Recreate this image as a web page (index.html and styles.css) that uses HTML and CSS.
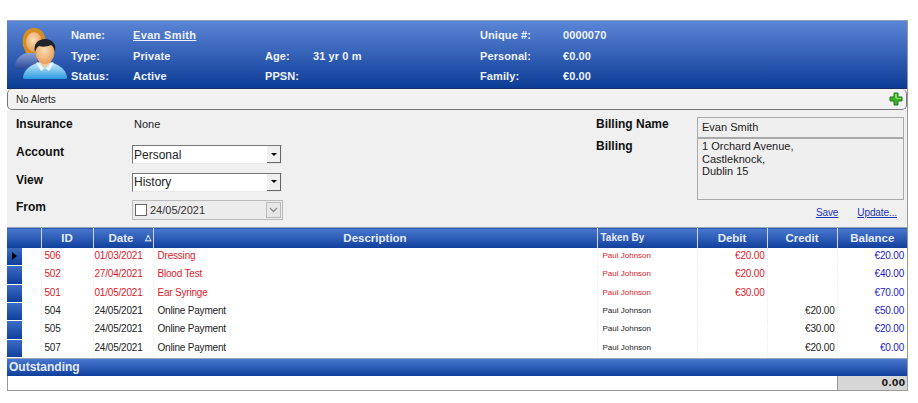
FILE: index.html
```html
<!DOCTYPE html>
<html lang="en">
<head>
<meta charset="UTF-8" />
<title>Account History</title>
<link rel="stylesheet" href="styles.css">
</head>
<body>
  <div id="conta">
    <div class="cabecalho">
      <svg class="avatar" width="54" height="55" viewBox="0 0 54 55">
        <defs>
          <linearGradient id="camisa" x1="0" y1="0" x2="0" y2="1">
            <stop offset="0" stop-color="#cdeefa" />
            <stop offset="1" stop-color="#2a9be0" />
          </linearGradient>
          <linearGradient id="camisa2" x1="0" y1="0" x2="0" y2="1">
            <stop offset="0" stop-color="#8ea6dc" />
            <stop offset="1" stop-color="#2c4796" />
          </linearGradient>
          <radialGradient id="pele" cx="0.45" cy="0.4" r="0.7">
            <stop offset="0" stop-color="#fde0b8" />
            <stop offset="1" stop-color="#e2924a" />
          </radialGradient>
        </defs>
        <!-- mulher, atras -->
        <path d="M1 41c0-8 6-13 14-15h8v17H4c-2 0-3-1-3-2z" fill="url(#camisa2)" />
        <path d="M9 20C7 9 12 2 20 2c8 0 13 7 11 18l-2 7H12z" fill="#d58c22" />
        <ellipse cx="20" cy="16" rx="8" ry="10" fill="url(#pele)" />
        <!-- homem, na frente -->
        <path d="M11 53c-2 0-2-1-2-2 1-8 9-13 18-15h8c9 2 17 7 18 15 0 1 0 2-2 2z" fill="url(#camisa)" />
        <path d="M25 36l6 6 6-6-2-3h-8z" fill="#f3c794" />
        <path d="M24 36l7 7 7-7 2 1-5 8-4-3-4 3-5-8z" fill="#e8f7fd" />
        <ellipse cx="31" cy="26" rx="9.500" ry="12" fill="url(#pele)" />
        <path d="M21 26c-2-8 3-13 10-13 7 0 12 5 10 13-1-4-2-6-4-7-4 2-9 2-12 1-2 1-3 3-4 6z" fill="#20242c" />
      </svg>
      <div class="dados">
        <span class="rot">Name:</span><a class="val nome" href="#">Evan Smith</a>
        <span></span><span></span>
        <span class="rot">Unique #:</span><span class="val">0000070</span>
        <span class="rot">Type:</span><span class="val">Private</span>
        <span class="rot">Age:</span><span class="val">31 yr 0 m</span>
        <span class="rot">Personal:</span><span class="val">€0.00</span>
        <span class="rot">Status:</span><span class="val">Active</span>
        <span class="rot">PPSN:</span><span></span>
        <span class="rot">Family:</span><span class="val">€0.00</span>
      </div>
    </div>

    <div class="alertas">
      <span>No Alerts</span>
      <svg width="14" height="14" viewBox="0 0 14 14">
        <path d="M5 1h4v4h4v4H9v4H5V9H1V5h4z" fill="#3fae2a" stroke="#1f7d1a" stroke-width="1" stroke-linejoin="round" />
        <path d="M6 2h2v4h4v1H7V6H6z" fill="#8fe06a" />
      </svg>
    </div>

    <div class="formulario">
      <div class="esquerda">
        <div class="linha l-ins"><b>Insurance</b><span class="texto">None</span></div>
        <div class="linha"><b>Account</b><div class="combo"><span>Personal</span><i class="seta"></i></div></div>
        <div class="linha"><b>View</b><div class="combo"><span>History</span><i class="seta"></i></div></div>
        <div class="linha"><b>From</b>
          <div class="data">
            <i class="check"></i><span>24/05/2021</span>
            <i class="seta-data">
              <svg width="9" height="6" viewBox="0 0 9 6"><path d="M1 1l3.500 3.500L8 1" fill="none" stroke="#8a8a8a" stroke-width="1.300" /></svg>
            </i>
          </div>
        </div>
      </div>
      <div class="direita">
        <div class="rotulos"><b>Billing Name</b><b>Billing</b></div>
        <div class="caixas">
          <div class="caixa">Evan Smith</div>
          <div class="caixa endereco">1 Orchard Avenue,<br>Castleknock,<br>Dublin 15</div>
          <div class="links"><a href="#">Save</a><a href="#">Update...</a></div>
        </div>
      </div>
    </div>

    <table class="grade">
      <thead>
        <tr>
          <th class="c-sel"></th>
          <th class="c-id">ID</th>
          <th class="c-data">Date<em>△</em></th>
          <th>Description</th>
          <th class="c-por">Taken By</th>
          <th class="c-val">Debit</th>
          <th class="c-val">Credit</th>
          <th class="c-val">Balance</th>
        </tr>
      </thead>
      <tbody>
        <tr class="deb"><td class="sel"><i class="atual"></i></td><td class="id">506</td><td class="dt">01/03/2021</td><td>Dressing</td><td class="por">Paul Johnson</td><td class="num">€20.00</td><td class="num"></td><td class="num sal">€20.00</td></tr>
        <tr class="deb"><td class="sel"></td><td class="id">502</td><td class="dt">27/04/2021</td><td>Blood Test</td><td class="por">Paul Johnson</td><td class="num">€20.00</td><td class="num"></td><td class="num sal">€40.00</td></tr>
        <tr class="deb"><td class="sel"></td><td class="id">501</td><td class="dt">01/05/2021</td><td>Ear Syringe</td><td class="por">Paul Johnson</td><td class="num">€30.00</td><td class="num"></td><td class="num sal">€70.00</td></tr>
        <tr><td class="sel"></td><td class="id">504</td><td class="dt">24/05/2021</td><td>Online Payment</td><td class="por">Paul Johnson</td><td class="num"></td><td class="num">€20.00</td><td class="num sal">€50.00</td></tr>
        <tr><td class="sel"></td><td class="id">505</td><td class="dt">24/05/2021</td><td>Online Payment</td><td class="por">Paul Johnson</td><td class="num"></td><td class="num">€30.00</td><td class="num sal">€20.00</td></tr>
        <tr><td class="sel"></td><td class="id">507</td><td class="dt">24/05/2021</td><td>Online Payment</td><td class="por">Paul Johnson</td><td class="num"></td><td class="num">€20.00</td><td class="num sal">€0.00</td></tr>
      </tbody>
    </table>

    <div class="pendente">Outstanding</div>
    <div class="total"><span>0.00</span></div>
  </div>
</body>
</html>
```

FILE: styles.css
```css
* {
  box-sizing: border-box;
}
body {
  margin: 0;
  background: #fff;
  color: #222;
  font-family: 'Liberation Sans', Arial, sans-serif;
  font-size: 11px;
}
#conta {
  width: 901px;
  margin: 20px 0 0 7px;
  border-right: 1px solid #999;
}
.cabecalho {
  height: 69px;
  background: linear-gradient(#5b85d6, #0d3c96);
  border-top: 1px solid #8f9fbb;
  border-bottom: 1px solid #1a2f60;
  display: flex;
  align-items: flex-start;
  padding: 5px 0 0 7px;
}
.avatar {
  flex: none;
}
.dados {
  display: grid;
  grid-template-columns: 62px 132px 48px 167px 83px 80px;
  grid-auto-rows: 20.500px;
  align-items: center;
  margin: -1px 0 0 3px;
  color: #eef3fb;
  font-size: 11px;
  font-weight: 700;
  letter-spacing: 0.1px;
}
.dados .nome {
  color: #eef3fb;
  justify-self: start;
  letter-spacing: 0.35px;
}
.alertas {
  height: 21px;
  background: #f2f2f2;
  border: 1px solid #777;
  border-top: 0;
  border-radius: 5px;
  display: flex;
  align-items: center;
  justify-content: space-between;
  padding: 0 3px 0 8px;
  font-size: 10px;
  letter-spacing: -0.1px;
  color: #222;
}
.formulario {
  height: 117px;
  background: #f0f0f0;
  display: flex;
  justify-content: space-between;
  padding-top: 7px;
}
.esquerda {
  padding-left: 9px;
  margin-top: -3px;
}
.linha {
  display: flex;
  align-items: center;
  height: 28px;
  margin-bottom: -0.500px;
}
.linha b, .rotulos b {
  font-size: 12px;
  font-weight: 700;
  color: #111;
}
.linha b {
  width: 116px;
  margin-bottom: 5px;
}
.l-ins {
  height: 20px;
  margin-bottom: 6.500px;
}
.l-ins b {
  margin-bottom: 0;
}
.texto {
  padding-left: 2px;
}
.combo {
  width: 150px;
  height: 19px;
  background: #fff;
  border: 1px solid #777;
  border-right-color: #e8e8e8;
  border-bottom-color: #e8e8e8;
  display: flex;
  align-items: center;
  justify-content: space-between;
  padding-left: 1px;
  font-size: 12px;
}
.seta {
  width: 14px;
  height: 17px;
  background: #f0f0f0;
  border-right: 1px solid #666;
  border-bottom: 1px solid #666;
  display: flex;
  align-items: center;
  justify-content: center;
}
.seta::before {
  content: "";
  border: 3px solid transparent;
  border-top-color: #000;
  border-bottom-width: 0;
}
.data {
  width: 151px;
  height: 20px;
  background: #ececec;
  border: 1px solid #bbb;
  display: flex;
  align-items: center;
  padding-left: 2px;
  font-size: 11px;
  color: #333;
}
.check {
  width: 12px;
  height: 12px;
  background: #fff;
  border: 1px solid #666;
  margin-right: 3px;
}
.seta-data {
  margin-left: auto;
  margin-right: 1px;
  width: 15px;
  height: 16px;
  border: 1px solid #bbb;
  background: #e6e6e6;
  display: flex;
  align-items: center;
  justify-content: center;
}
.direita {
  display: flex;
  padding-right: 3px;
}
.rotulos {
  width: 101px;
  display: flex;
  flex-direction: column;
  gap: 8px;
}
.caixas {
  width: 207px;
  font-size: 11px;
}
.caixa {
  height: 21px;
  border: 1px solid #aaa;
  background: #efefef;
  padding: 3px 4px;
  color: #222;
}
.endereco {
  height: 62px;
  padding-top: 1px;
  line-height: 12.500px;
}
.links {
  display: flex;
  justify-content: flex-end;
  gap: 19px;
  padding: 7px 7px 0 0;
  font-size: 10px;
  letter-spacing: -0.1px;
}
.links a {
  color: #1a33b5;
}
.grade {
  width: 900px;
  table-layout: fixed;
  border-collapse: collapse;
  background: #fff;
}
.grade th {
  height: 20px;
  padding: 0;
  background: linear-gradient(#4a78cf, #0f3f9c);
  border-top: 1px solid #9aa5b8;
  border-left: 1px solid #cfd9ee;
  color: #e4ecf8;
  font-size: 11.500px;
  font-weight: 700;
  text-align: center;
}
.grade th:first-child {
  border-left: 0;
}
.c-sel {
  width: 34px;
}
.c-id {
  width: 52px;
}
.grade th.c-data {
  width: 60px;
  text-align: left;
  padding-left: 15px;
}
.grade th.c-por {
  width: 100px;
  text-align: left;
  padding-left: 3px;
  font-size: 10px;
}
.c-val {
  width: 70px;
}
.grade th em {
  font-style: normal;
  font-size: 8px;
  padding-left: 12px;
  color: #fff;
  vertical-align: 2px;
}
.grade td {
  height: 18.340px;
  padding: 0 4px 2px 4px;
  border-left: 1px dotted #eee;
  font-size: 10px;
  letter-spacing: -0.2px;
  color: #222;
  white-space: nowrap;
}
.grade td.sel {
  padding: 0;
  border-left: 0;
  background: linear-gradient(#3d6cc4, #0f3f9c) no-repeat left top / 15px 100%;
  border-bottom: 1px solid #fff;
}
.atual {
  display: block;
  width: 0;
  margin-left: 5px;
  border: 4px solid transparent;
  border-left: 5px solid #000;
  border-right: 0;
}
.grade td.id {
  padding-left: 3px;
}
.grade td.dt {
  padding-left: 1px;
}
.grade .deb td {
  color: #e01a2a;
}
.grade td.por {
  font-size: 8px;
  letter-spacing: 0;
  padding-left: 5px;
}
.grade td.num {
  text-align: right;
  padding-right: 2px;
}
.grade td.sal, .grade .deb td.sal {
  color: #2222cc;
  padding-right: 3px;
}
.pendente {
  height: 18px;
  line-height: 16px;
  background: linear-gradient(#4a78cf, #0f3f9c);
  border-top: 1px solid #9aa5b8;
  color: #e4ecf8;
  font-size: 12px;
  font-weight: 700;
  padding-left: 2px;
}
.total {
  height: 15px;
  border: 1px solid #999;
  border-top: 0;
  border-right: 0;
  background: #fff;
  display: flex;
  justify-content: flex-end;
}
.total span {
  width: 70px;
  background: #d6d6d6;
  border-left: 1px solid #999;
  text-align: right;
  font-family: 'DejaVu Sans', sans-serif;
  font-size: 9.500px;
  font-weight: 700;
  line-height: 14px;
  padding-right: 2px;
}
```
